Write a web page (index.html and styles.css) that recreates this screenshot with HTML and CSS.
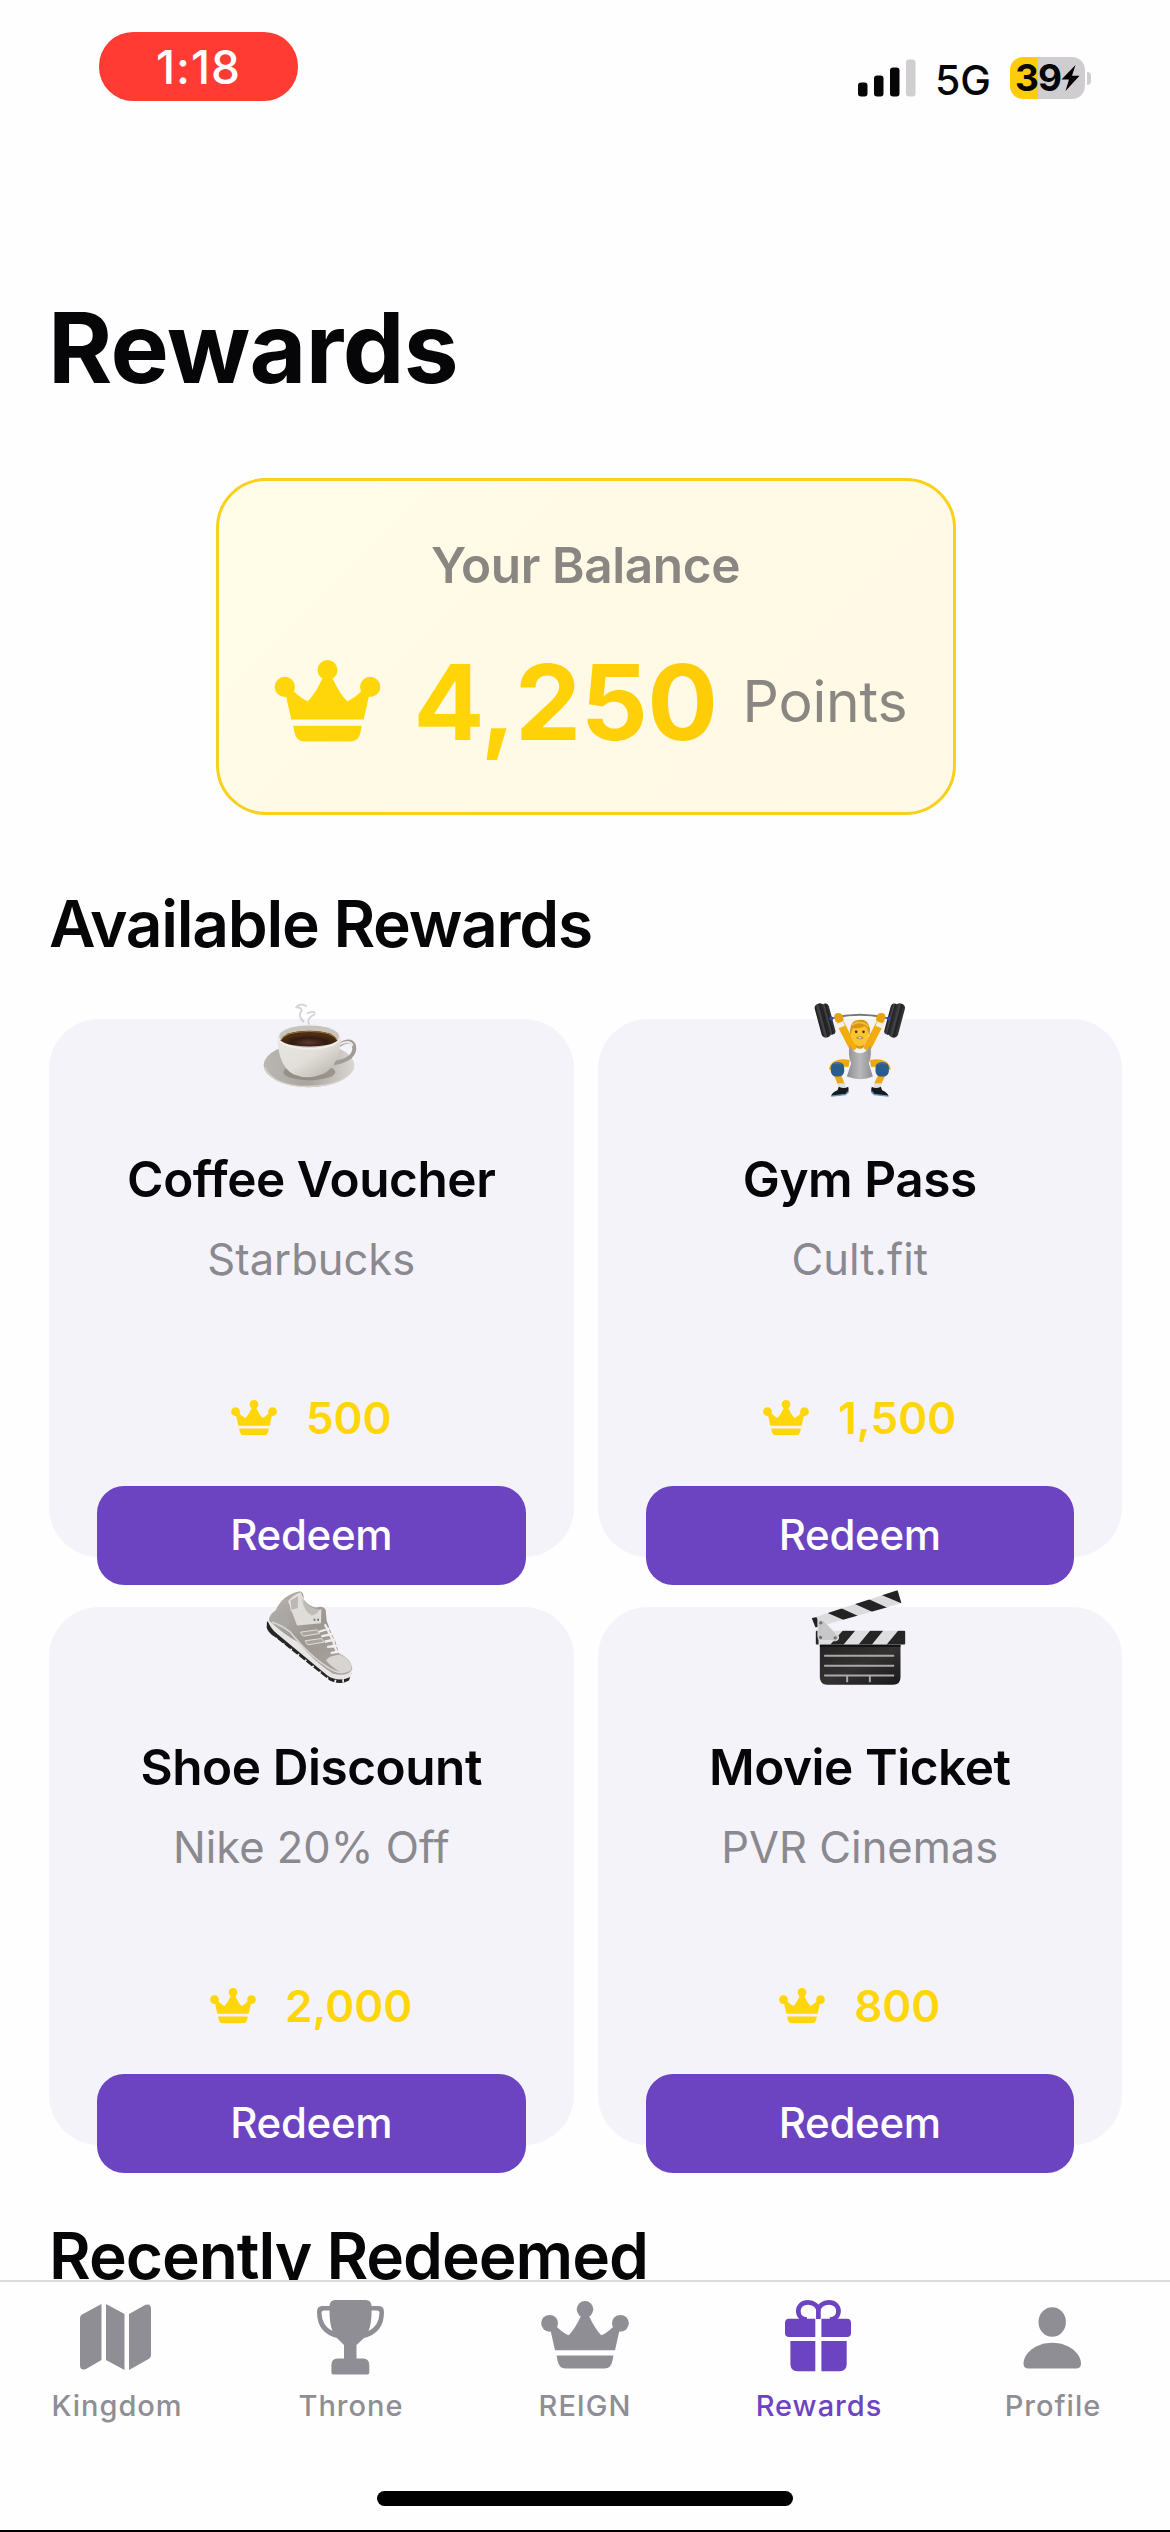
FILE: index.html
```html
<!DOCTYPE html>
<html lang="en">
<head>
<meta charset="utf-8">
<title>Rewards</title>
<link rel="stylesheet" href="styles.css">
</head>
<body>
<svg class="defs" width="0" height="0" aria-hidden="true">
  <symbol id="crown" viewBox="4 6 88 68">
    <circle cx="12.6" cy="28.3" r="8.4"/><circle cx="48" cy="14.3" r="8.3"/><circle cx="83.4" cy="28.3" r="8.4"/>
    <path d="M13.2 34 L20 32 Q26 38 31.7 40.3 Q38 34 44 21 L52 21 Q58 34 64.3 40.3 Q70 38 76 32 L82.8 34 L78 55.3 H18 Z"/>
    <path d="M19.6 60.5 H76.4 L75.5 65.5 Q74 73.5 67.5 73.5 H28.5 Q22 73.5 20.5 65.5 Z"/>
  </symbol>
</svg>
<div class="screen">
  <header class="status">
    <div class="clock">1:18</div>
    <div class="status-right">
      <svg class="signal" width="58" height="38" viewBox="0 0 58 38">
        <rect x="0" y="23.500" width="9.500" height="14" rx="3"/>
        <rect x="16" y="16.500" width="9.500" height="21" rx="3"/>
        <rect x="32" y="8.500" width="9.500" height="29" rx="3"/>
        <rect class="weak" x="48" y="0.500" width="9.500" height="37" rx="3"/>
      </svg>
      <span class="network">5G</span>
      <div class="battery">
        <span>39</span>
        <svg width="19" height="26" viewBox="0 0 19 26"><path d="M14.500 0 L0.500 14.500 H8 L4.500 26 L18.500 10.800 H11 Z"/></svg>
      </div>
      <i class="battery-tip"></i>
    </div>
  </header>

  <main class="content">
    <h1>Rewards</h1>

    <section class="balance">
      <h2>Your Balance</h2>
      <div class="balance-row">
        <svg class="balance-crown"><use href="#crown"/></svg>
        <strong>4,250</strong>
        <span>Points</span>
      </div>
    </section>

    <h2 class="section-title">Available Rewards</h2>
    <section class="grid">
      <article class="card">
        <svg class="emoji" viewBox="63 1.5 300 342">
          <defs>
            <linearGradient id="cup" x1="0" x2="1" y1="0" y2="1"><stop offset="0" stop-color="#e9e7e3"/><stop offset=".5" stop-color="#e2dfda"/><stop offset="1" stop-color="#b3aea7"/></linearGradient>
            <linearGradient id="saucer" x1="0" x2="1"><stop offset="0" stop-color="#bab7b2"/><stop offset=".5" stop-color="#aaa59f"/><stop offset="1" stop-color="#dad7d2"/></linearGradient>
            <radialGradient id="coffee" cx=".5" cy=".75"><stop offset="0" stop-color="#5d3b30"/><stop offset=".6" stop-color="#331b13"/><stop offset="1" stop-color="#4a2d12"/></radialGradient>
          </defs>
          <g fill="none" stroke="#b9b8be" stroke-linecap="round" opacity=".6"><path d="M198 46 Q180 36 170 50 Q192 52 181 68 Q176 78 190 93" stroke-width="6"/><path d="M202 68 Q230 58 222 73 Q198 84 208 103 L212 130" stroke-width="5"/></g>
          <ellipse cx="207" cy="224" rx="136" ry="66" fill="url(#saucer)"/>
          <path d="M74 230 Q100 288 207 288 Q316 284 341 230" fill="none" stroke="#d6d3cd" stroke-width="4"/>
          <ellipse cx="208" cy="245" rx="78" ry="24" fill="#86807a" opacity=".65"/>
          <path d="M295 165 Q332 141 342 165 Q350 206 282 218" fill="none" stroke="#a09c97" stroke-width="12"/>
          <path d="M296 163 Q330 145 338 166" fill="none" stroke="#eceae7" stroke-width="6"/>
          <path d="M112 140 Q114 225 160 251 Q205 270 252 249 Q300 221 303 140 Z" fill="url(#cup)"/>
          <ellipse cx="207.500" cy="140" rx="96" ry="38" fill="#f0eeec"/>
          <ellipse cx="207.500" cy="138" rx="90" ry="33" fill="#c8c3bc"/>
          <path d="M122 151 Q132 121 208 121 Q282 121 292 151 Q270 168 208 168 Q145 168 122 151 Z" fill="url(#coffee)"/>
          <path d="M122 150 Q134 123 208 123 Q280 123 292 150" fill="none" stroke="#9d7035" stroke-width="3"/>
        </svg>
        <h3>Coffee Voucher</h3>
        <p class="brand">Starbucks</p>
        <div class="price"><svg><use href="#crown"/></svg><span>500</span></div>
        <button>Redeem</button>
      </article>

      <article class="card">
        <svg class="emoji" viewBox="58.5 16.5 300 342">
          <defs>
            <linearGradient id="plate"><stop offset="0" stop-color="#1a1a1c"/><stop offset=".4" stop-color="#48484b"/><stop offset=".55" stop-color="#202022"/><stop offset="1" stop-color="#3a3a3d"/></linearGradient>
            <linearGradient id="suit"><stop offset="0" stop-color="#8d8d91"/><stop offset=".5" stop-color="#b9b9bc"/><stop offset="1" stop-color="#8f8f93"/></linearGradient>
          </defs>
          <path d="M120 99 Q208 77 296 99" fill="none" stroke="#77777b" stroke-width="6"/>
          <g fill="none" stroke="#f3ac08" stroke-width="23" stroke-linecap="round"><path d="M151 116 L186 184"/><path d="M267 116 L232 184"/></g>
          <g stroke="#eff0f3" stroke-width="22"><path d="M147 111 L153 125"/><path d="M271 111 L265 125"/></g>
          <g transform="rotate(-15 102 102)"><rect x="82" y="51" width="29" height="105" rx="13" fill="url(#plate)"/><rect x="103" y="56" width="22" height="96" rx="10" fill="url(#plate)"/></g>
          <g transform="rotate(15 314 102)"><rect x="305" y="51" width="29" height="105" rx="13" fill="url(#plate)"/><rect x="291" y="56" width="22" height="96" rx="10" fill="url(#plate)"/></g>
          <g fill="#284ba2"><circle cx="122" cy="99" r="6"/><circle cx="295" cy="99" r="6"/></g>
          <path d="M132 95 Q130 81 148 83 Q160 86 159 105 Q149 115 135 109 Z" fill="#e8a20b"/>
          <path d="M284 95 Q286 81 268 83 Q256 86 257 105 Q267 115 281 109 Z" fill="#e8a20b"/>
          <path d="M176 234 Q131 227 126 254 M240 234 Q285 227 290 254" fill="none" stroke="#eba90e" stroke-width="22"/>
          <path d="M139 264 L153 298 M276 264 L260 298" stroke="#eeaa15" stroke-width="20"/>
          <path d="M179 180 Q187 203 208 203 Q229 203 238 180 Q246 205 235 233 L247 273 Q211 289 169 273 L182 233 Q170 205 179 180Z" fill="url(#suit)"/>
          <rect x="195" y="160" width="26" height="30" rx="12" fill="#dc970c"/>
          <ellipse cx="208" cy="145" rx="27" ry="37" fill="#fbc431"/>
          <path d="M179 151 Q176 110 197 105 Q226 97 235 119 Q241 132 236 151 Q232 126 222 122 Q198 132 187 127 Z" fill="#d79416"/>
          <path d="M184 120 Q196 107 216 112 Q230 116 232 125" fill="none" stroke="#f2bd3d" stroke-width="5"/>
          <g fill="#503315"><circle cx="197" cy="139" r="4"/><circle cx="219" cy="139" r="4"/></g>
          <path d="M198 157 Q208 150 218 157 Q208 164 198 157" fill="#f5f0e2" stroke="#97631d" stroke-width="2"/>
          <rect x="121" y="230" width="40" height="43" rx="16" fill="#285d8e"/><rect x="255" y="230" width="40" height="43" rx="16" fill="#285d8e"/>
          <path d="M129 236 Q142 228 151 237 M263 237 Q273 228 286 236" fill="none" stroke="#3c79ad" stroke-width="4"/>
          <path d="M142 294 L165 293 L164 309 H144 Z M251 293 L273 294 L271 309 H251 Z" fill="#dfe1e8"/>
          <path d="M145 304 Q160 311 173 304 Q179 322 163 327 L122 332 Q123 321 141 314 Z M271 304 Q256 311 244 304 Q237 322 252 327 L294 332 Q292 321 275 314 Z" fill="#1a1b1e"/>
          <path d="M122 332 L165 327 L174 318 M294 332 L251 327 L243 318" fill="none" stroke="#579bd1" stroke-width="4"/>
        </svg>
        <h3>Gym Pass</h3>
        <p class="brand">Cult.fit</p>
        <div class="price"><svg><use href="#crown"/></svg><span>1,500</span></div>
        <button>Redeem</button>
      </article>

      <article class="card">
        <svg class="emoji" viewBox="63 25.5 300 342">
          <defs><linearGradient id="shoe" x1="0" x2="1" y1="0" y2="1"><stop offset="0" stop-color="#b7b3af"/><stop offset=".5" stop-color="#9d9792"/><stop offset="1" stop-color="#aca6a1"/></linearGradient></defs>
          <path d="M81 152 L80 171 Q84 187 104 199 L269 330 Q300 345 327 330 L334 308 Z" fill="#252525"/>
          <g stroke="#f3f2f5" stroke-width="5"><path d="M111 203 L105 210 M133 219 L126 227 M155 235 L148 243 M177 251 L169 259 M199 268 L191 276 M221 286 L213 294 M242 303 L234 311 M264 321 L257 330 M287 328 L284 338 M309 326 L310 336"/></g>
          <path d="M83 151 Q91 174 111 190 L263 316 Q296 337 333 319 L337 292 L111 132 Z" fill="#e6e4e4"/>
          <path d="M87 150 Q86 133 107 119 Q128 72 180 62 Q193 65 191 87 Q208 109 229 111 Q249 104 257 118 L260 151 L272 182 L287 215 L297 248 Q335 265 337 296 Q321 321 278 309 Q223 274 176 216 Q128 190 87 150 Z" fill="url(#shoe)"/>
          <path d="M144 92 Q158 73 182 65 L190 83 L197 109 Q218 129 244 116 L243 158 L171 165 Z" fill="#deddda"/>
          <path d="M185 84 Q193 126 216 135 Q235 130 238 116 L226 115 Q203 109 185 84Z" fill="#c0bcb8"/>
          <path d="M150 89 L176 74 L175 114 L153 120 Z" fill="#bcb8b5" stroke="#eeedeb" stroke-width="2"/>
          <path d="M102 129 Q119 118 138 127 Q149 142 147 166 L129 174 Q105 151 88 150 Z" fill="#aaa8a4"/>
          <path d="M96 155 Q122 163 150 184 Q211 259 263 290 Q302 319 334 295" fill="none" stroke="#d8d4d1" stroke-width="5"/>
          <path d="M258 270 Q263 257 300 252 Q334 267 335 293 Q327 305 303 306 Q277 292 258 270Z" fill="#d7d4d2"/>
          <path d="M181 185 L231 178 L239 189 L190 197Z M195 211 L245 204 L252 215 L203 223Z" fill="#aaa49f" stroke="#e1dfdc" stroke-width="3"/>
          <path d="M239 183 L268 174 M247 197 L278 190 M257 213 L284 207 M264 229 L293 225 M275 247 L296 243 M256 164 L268 188 M268 188 L282 217 M281 220 L291 245" fill="none" stroke="#f0eeee" stroke-width="7" stroke-linecap="round"/>
          <path d="M221 148 h5 M232 148 h5" stroke="#6d6965" stroke-width="6"/>
        </svg>
        <h3>Shoe Discount</h3>
        <p class="brand">Nike 20% Off</p>
        <div class="price"><svg><use href="#crown"/></svg><span>2,000</span></div>
        <button>Redeem</button>
      </article>

      <article class="card">
        <svg class="emoji" viewBox="58.5 25.5 300 342">
          <defs>
            <linearGradient id="slate" x1="0" x2="1" y1="0" y2="1"><stop offset="0" stop-color="#242222"/><stop offset=".5" stop-color="#343131"/><stop offset="1" stop-color="#191818"/></linearGradient>
            <clipPath id="arm"><path d="M64 143 L321 59 L333 98 L75 171 Z"/></clipPath>
            <clipPath id="bar"><rect x="76" y="181" width="268" height="41" rx="3"/></clipPath>
          </defs>
          <path d="M64 143 L321 59 L333 98 L75 171 Z" fill="#dcdcde"/>
          <g clip-path="url(#arm)" fill="#242323"><path d="M61 139 L79 141 L87 172 L66 173Z M108 126 L149 112 L205 137 L165 151Z M190 99 L232 85 L291 112 L248 125Z M271 73 L324 55 L337 100Z"/></g>
          <rect x="76" y="181" width="268" height="41" rx="3" fill="#dedde0"/>
          <g clip-path="url(#bar)" fill="#262525"><path d="M73 178 H84 V224 H73Z M158 179 H195 L157 225 H117Z M240 179 H279 L242 225 H202Z M324 179 H348 V225 H286Z"/></g>
          <path d="M88 222 H330 V320 Q330 342 308 343 H110 Q89 342 88 320 Z" fill="url(#slate)"/>
          <path d="M88 226 H330" stroke="#111" stroke-width="5"/>
          <path d="M101 256 H311 M101 286 H311 M101 315 H311 M170 315 V335 M238 315 V335" stroke="#aaa8aa" stroke-width="6"/>
          <path d="M82 151 Q89 144 98 149 L144 197 Q148 207 137 211 L91 210 Q82 208 82 198Z" fill="#c7c7ca" stroke="#ededf0" stroke-width="2"/>
          <g fill="#737376"><circle cx="91" cy="157" r="5"/><circle cx="90" cy="201" r="5"/><circle cx="134" cy="202" r="5"/></g>
        </svg>
        <h3>Movie Ticket</h3>
        <p class="brand">PVR Cinemas</p>
        <div class="price"><svg><use href="#crown"/></svg><span>800</span></div>
        <button>Redeem</button>
      </article>
    </section>

    <h2 class="section-title recent">Recently Redeemed</h2>
  </main>

  <footer class="tabbar">
    <nav class="tabs">
      <a class="tab">
        <svg viewBox="0 0 96 84"><path d="M32.500 9 V65 L17 74 Q11 76 11 70 V23 Q11 20.500 13 19.500Z M37 9 L55.500 19 V75 L37 65Z M60 19 L76 10 Q82 8 82 14 V60 Q82 62.500 80 63.700 L60 75Z"/></svg>
        <span>Kingdom</span>
      </a>
      <a class="tab">
        <svg viewBox="0 0 96 84"><path d="M32 5 H63 Q68 5 68.600 11 H76 Q81 11 81 17 Q81 38 61 43 L53.500 50 V63.500 H60 Q66.300 63.500 66.300 70 V77.500 Q66.300 79.500 64.500 79.500 H30.200 Q28.400 79.500 28.400 77.500 V70 Q28.400 63.500 34.500 63.500 H41 V50 L34 43 Q14 38 14 17 Q14 11 19 11 H26.500 Q27 5 32 5Z M26.500 15.500 H20.500 Q18.500 15.500 18.500 18 Q19 31 29.500 36 Q26.500 29 26.500 15.500Z M68.600 15.500 Q68.600 29 65.500 36 Q76 31 76.500 18 Q76.500 15.500 74.500 15.500Z" fill-rule="evenodd"/></svg>
        <span>Throne</span>
      </a>
      <a class="tab">
        <svg viewBox="0 0 96 84"><use href="#crown" x="4" y="6" width="88" height="68"/></svg>
        <span>REIGN</span>
      </a>
      <a class="tab active">
        <svg viewBox="0 0 96 84"><path d="M18 23.700 H44.300 V42 H18 Q14 42 14 38 V28 Q14 23.700 18 23.700Z M50.400 23.700 H76 Q80 23.700 80 28 V38 Q80 42 76 42 H50.400Z M19.400 46 H44.300 V76.300 H26.500 Q19.400 76.300 19.400 69Z M50.400 46 H75.700 V69 Q75.700 76.300 68.500 76.300 H50.400Z"/><path class="bow" d="M47.400 24 V16 C47.400 11 42.500 7.300 37 7.300 C31 7.300 27.300 11.200 27.300 16 C27.300 21 31 24.500 36 24.500 M47.400 16 C47.400 11 52.300 7.300 57.800 7.300 C63.800 7.300 67.500 11.200 67.500 16 C67.500 21 63.800 24.500 58.800 24.500"/></svg>
        <span>Rewards</span>
      </a>
      <a class="tab">
        <svg viewBox="0 0 96 84"><ellipse cx="47.200" cy="27" rx="13.700" ry="14.800"/><path d="M18.500 68.500 C18.500 59 30 47.700 47.200 47.700 C64.500 47.700 76 59 76 68.500 Q76 73.500 71 73.500 H23.500 Q18.500 73.500 18.500 68.500Z"/></svg>
        <span>Profile</span>
      </a>
    </nav>
    <div class="home-indicator"></div>
  </footer>
</div>
</body>
</html>
```
FILE: styles.css
```css
* { box-sizing: border-box; margin: 0; padding: 0; }
body { background: #fefefe; color: #060608; font-family: Inter, "Liberation Sans", sans-serif; }
.defs { display: block; }
.screen { display: flex; flex-direction: column; width: 1170px; height: 2532px; overflow: hidden; background: #fefefe; }

.status { flex: none; display: flex; align-items: flex-start; justify-content: space-between; height: 140px; padding: 32px 79px 0 99px; }
.clock { width: 199px; height: 69px; border-radius: 34px; background: #ff3b33; color: #fff; font-size: 46px; font-weight: 500; line-height: 70px; letter-spacing: 1px; text-align: center; }
.status-right { display: flex; align-items: center; height: 92px; }
.signal { fill: #060608; }
.signal .weak { fill: #d0ced0; }
.network { margin-left: 19px; width: 75px; font-size: 41px; font-weight: 500; line-height: 44px; margin-top: 3px; }
.battery { display: flex; align-items: center; justify-content: center; width: 75px; height: 42px; border-radius: 13px; background: linear-gradient(90deg, #ffcc0a 28.500px, #d0cdd0 28.500px); font-size: 37px; font-weight: 700; line-height: 42px; letter-spacing: -1px; }
.battery-tip { width: 4px; height: 13px; margin-left: 2px; border-radius: 0 4px 4px 0; background: #d0cdd0; }

.content { flex: 1; min-height: 0; overflow: hidden; padding: 148px 48px 0 49px; }
h1 { margin-left: -1px; font-size: 98px; font-weight: 700; line-height: 120px; letter-spacing: -0.6px; }

.balance { width: 740px; height: 337px; margin: 70px 0 0 166.500px; padding: 54px 0 0; border: 3px solid #f9d01b; border-radius: 50px; background: linear-gradient(135deg, #fffde8, #fffae6 40%, #fff9e5); color: #8a8682; }
.balance h2 { font-size: 49.500px; font-weight: 600; line-height: 60px; letter-spacing: -0.4px; text-align: center; }
.balance-row { display: flex; align-items: center; height: 126px; margin-top: 43px; padding-left: 55px; }
.balance-crown { width: 107px; height: 82px; fill: #ffd60a; }
.balance strong { margin-left: 33px; font-size: 105px; font-weight: 700; letter-spacing: -0.5px; background: linear-gradient(90deg, #ffd608, #ffcc08); background-clip: text; color: transparent; }
.balance span { margin-left: 25px; font-size: 57px; letter-spacing: -0.2px; }

.section-title { margin-top: 70px; font-size: 64px; font-weight: 600; line-height: 78px; letter-spacing: -1.25px; }
.section-title.recent { margin-top: 72.500px; letter-spacing: -1.05px; }

.grid { display: grid; grid-template-columns: 1fr 1fr; grid-auto-rows: 538px; gap: 50px 24px; margin-top: 55.500px; }
.card { display: flex; flex-direction: column; align-items: center; justify-content: center; border-radius: 50px; background: #f4f3f9; }
.card > * { flex: none; }
.emoji { width: 100px; height: 114px; }
.card h3 { margin-top: 44.500px; font-size: 49.500px; font-weight: 600; line-height: 60px; letter-spacing: -0.45px; }
.brand { margin-top: 24px; color: #8a8990; font-size: 43.500px; line-height: 52px; }
.price { display: flex; align-items: center; gap: 29px; height: 54px; margin-top: 106px; color: #ffd60a; font-size: 44px; font-weight: 600; }
.price svg { width: 46px; height: 35.500px; fill: #ffd60a; }
.card button { align-self: stretch; height: 98.500px; margin: 41px 48px 0; border: 0; border-radius: 27px; background: #6c44c2; color: #fff; font: 500 42px/98px Inter, "Liberation Sans", sans-serif; letter-spacing: -0.3px; }

.tabbar { flex: none; display: flex; flex-direction: column; align-items: center; height: 252px; border-top: 2px solid #dddbde; border-bottom: 2px solid #000; }
.tabs { display: grid; grid-template-columns: repeat(5, 234px); padding-top: 13px; }
.tab { display: flex; flex-direction: column; align-items: center; color: #8f8e95; font-size: 29px; font-weight: 500; line-height: 36px; letter-spacing: 1px; }
.tab svg { width: 96px; height: 84px; margin-bottom: 9px; fill: currentColor; }
.tab .bow { fill: none; stroke: currentColor; stroke-width: 4.700px; }
.tab.active { color: #6c44c2; }
.home-indicator { width: 416px; height: 15px; margin: auto 0 24px; border-radius: 8px; background: #000; }
```
